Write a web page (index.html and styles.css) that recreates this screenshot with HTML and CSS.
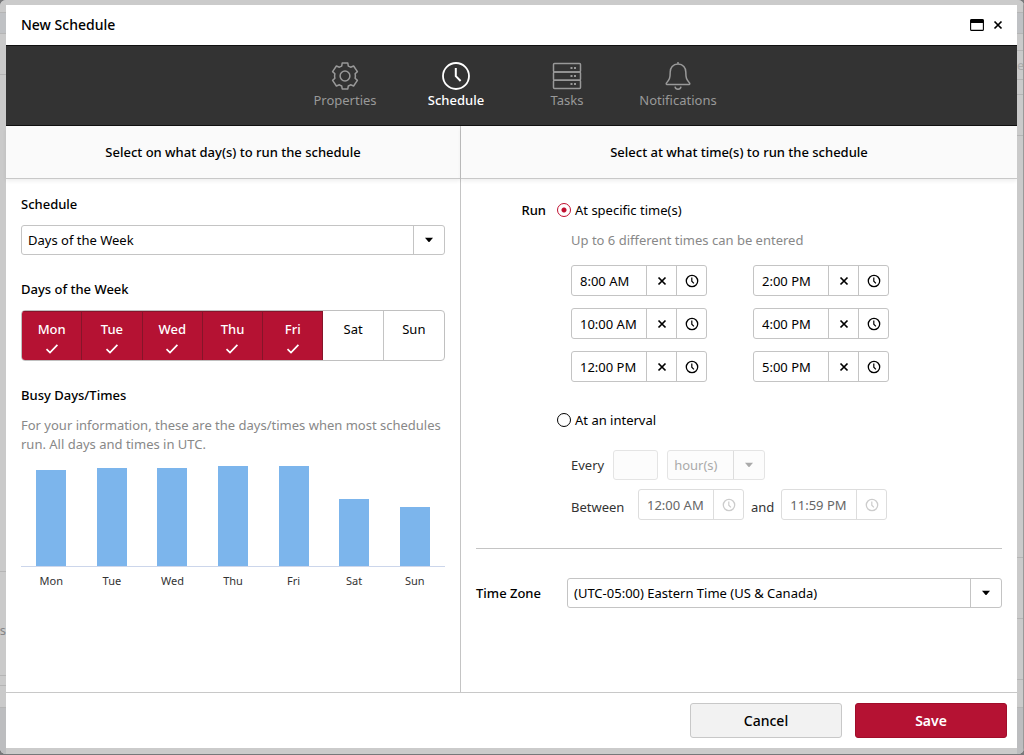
FILE: index.html
```html
<!DOCTYPE html>
<html lang="en">
<head>
<meta charset="utf-8">
<title>New Schedule</title>
<link rel="stylesheet" href="styles.css">
</head>
<body>
<svg class="defs" aria-hidden="true">
  <symbol id="i-clock" viewBox="0 0 14 14"><circle cx="7" cy="7" r="5.7" fill="none" stroke="currentColor" stroke-width="1.3"/><path d="M6.8 3.6V7.2L8.9 9.4" fill="none" stroke="currentColor" stroke-width="1.2"/></symbol>
  <symbol id="i-close" viewBox="0 0 10 10"><path d="M1.5 1.5L8.5 8.5M8.5 1.5L1.5 8.5" fill="none" stroke="currentColor" stroke-width="1.7"/></symbol>
  <symbol id="i-caret" viewBox="0 0 10 6"><path d="M1 .8H9L5.6 4.7Q5 5.3 4.4 4.7Z" fill="currentColor"/></symbol>
  <symbol id="i-check" viewBox="0 0 14 12"><path d="M1.5 6.2L5 9.6L12.4 1.8" fill="none" stroke="currentColor" stroke-width="1.7"/></symbol>
</svg>
<div class="page">
  <div class="edge edge-left" aria-hidden="true">
    <i class="h-13"></i><i class="h-21 tint"></i><i class="h-41"></i><i class="grow"></i><i class="h-104 word"><b>s</b></i><i class="h-10"></i><i class="h-22"></i><i class="h-46 base"></i>
  </div>
  <main class="dialog" role="dialog" aria-labelledby="title">
    <header class="titlebar">
      <h1 id="title">New Schedule</h1>
      <button class="tool" aria-label="Maximize"><svg width="14" height="12" viewBox="0 0 14 12"><rect x=".6" y=".6" width="12.8" height="10.8" rx="1" fill="none" stroke="#000" stroke-width="1.1"/><path d="M.5 .5H13.5V4H.5Z" fill="#000"/></svg></button>
      <button class="tool" aria-label="Close"><svg width="10" height="10"><use href="#i-close"/></svg></button>
    </header>
    <nav class="tabs">
      <button class="tab"><svg width="28" height="28" viewBox="0 0 28 28" fill="none" stroke="currentColor" stroke-width="1.5" stroke-linejoin="round"><path d="M11.200 1H16.800L17.300 4.100Q18.500 4.500 19.600 5.200L22.600 4L26.400 9.600L24.100 11.700Q24.400 12.800 24.400 14Q24.400 15.200 24.100 16.300L26.400 18.400L22.600 24L19.600 22.800Q18.500 23.500 17.300 23.900L16.800 27H11.200L10.700 23.900Q9.500 23.500 8.400 22.800L5.400 24L1.600 18.400L3.900 16.300Q3.600 15.200 3.600 14Q3.600 12.800 3.900 11.700L1.600 9.600L5.400 4L8.400 5.200Q9.500 4.500 10.700 4.100Z"/><circle cx="14" cy="14" r="4.900"/></svg><span>Properties</span></button>
      <button class="tab active" aria-current="page"><svg width="28" height="28" viewBox="0 0 28 28" fill="none" stroke="currentColor"><circle cx="14" cy="14" r="13" stroke-width="1.800"/><path d="M13.800 6V14.200L18.600 19" stroke-width="2"/></svg><span>Schedule</span></button>
      <button class="tab"><svg width="30" height="28" viewBox="0 0 30 28" fill="none" stroke="currentColor" stroke-width="1.500"><rect x="1.500" y="1.500" width="27" height="8.400" rx="1"/><rect x="1.500" y="9.900" width="27" height="8.300" rx="1"/><rect x="1.500" y="18.200" width="27" height="8.400" rx="1"/><path d="M18.500 6H20.500M22 6H24M18.500 14H20.500M22 14H24M18.500 22H20.500M22 22H24" stroke-width="2"/></svg><span>Tasks</span></button>
      <button class="tab"><svg width="28" height="28" viewBox="0 0 28 28" fill="none" stroke="currentColor" stroke-width="1.500" stroke-linejoin="round"><path d="M14 0V2M14 2C8.800 2 6.200 5.800 6.200 10C6.200 16.500 5.400 17.300 2.300 21.200Q2 22.200 3 22.400H25Q26 22.200 25.700 21.200C22.600 17.300 21.800 16.500 21.800 10C21.800 5.800 19.200 2 14 2Z"/><path d="M11 24.600Q11.500 27.200 14 27.200Q16.500 27.200 17 24.600"/></svg><span>Notifications</span></button>
    </nav>
    <div class="panels">
      <section class="panel days">
        <h2 class="panel-head">Select on what day(s) to run the schedule</h2>
        <form class="days-body">
          <label class="label" for="kind">Schedule</label>
          <div class="select"><select id="kind"><option>Days of the Week</option></select><span class="cell"><svg width="10" height="6"><use href="#i-caret"/></svg></span></div>
          <fieldset class="week">
            <legend class="label">Days of the Week</legend>
            <div class="toggles">
              <label class="toggle"><input type="checkbox" checked>Mon<svg width="14" height="12"><use href="#i-check"/></svg></label>
              <label class="toggle"><input type="checkbox" checked>Tue<svg width="14" height="12"><use href="#i-check"/></svg></label>
              <label class="toggle"><input type="checkbox" checked>Wed<svg width="14" height="12"><use href="#i-check"/></svg></label>
              <label class="toggle"><input type="checkbox" checked>Thu<svg width="14" height="12"><use href="#i-check"/></svg></label>
              <label class="toggle"><input type="checkbox" checked>Fri<svg width="14" height="12"><use href="#i-check"/></svg></label>
              <label class="toggle"><input type="checkbox">Sat<svg width="14" height="12"><use href="#i-check"/></svg></label>
              <label class="toggle"><input type="checkbox">Sun<svg width="14" height="12"><use href="#i-check"/></svg></label>
            </div>
          </fieldset>
          <h3 class="label">Busy Days/Times</h3>
          <p class="note">For your information, these are the days/times when most schedules run. All days and times in UTC.</p>
          <div class="chart">
            <div class="plot">
              <i style="height:96%"></i><i style="height:98%"></i><i style="height:98%"></i><i style="height:100%"></i><i style="height:100%"></i><i style="height:67%"></i><i style="height:59%"></i>
            </div>
            <div class="axis"><span>Mon</span><span>Tue</span><span>Wed</span><span>Thu</span><span>Fri</span><span>Sat</span><span>Sun</span></div>
          </div>
        </form>
      </section>
      <section class="panel times">
        <h2 class="panel-head">Select at what time(s) to run the schedule</h2>
        <form class="times-body">
          <div class="run">
            <span class="label run-label">Run</span>
            <div class="options">
              <label class="radio"><input type="radio" name="run" checked>At specific time(s)</label>
              <p class="hint">Up to 6 different times can be entered</p>
              <div class="slots">
                <div class="time"><input aria-label="Time 1" value="8:00 AM"><button type="button" class="cell" aria-label="Clear"><svg width="10" height="10"><use href="#i-close"/></svg></button><button type="button" class="cell" aria-label="Pick time"><svg width="14" height="14"><use href="#i-clock"/></svg></button></div>
                <div class="time"><input aria-label="Time 4" value="2:00 PM"><button type="button" class="cell" aria-label="Clear"><svg width="10" height="10"><use href="#i-close"/></svg></button><button type="button" class="cell" aria-label="Pick time"><svg width="14" height="14"><use href="#i-clock"/></svg></button></div>
                <div class="time"><input aria-label="Time 2" value="10:00 AM"><button type="button" class="cell" aria-label="Clear"><svg width="10" height="10"><use href="#i-close"/></svg></button><button type="button" class="cell" aria-label="Pick time"><svg width="14" height="14"><use href="#i-clock"/></svg></button></div>
                <div class="time"><input aria-label="Time 5" value="4:00 PM"><button type="button" class="cell" aria-label="Clear"><svg width="10" height="10"><use href="#i-close"/></svg></button><button type="button" class="cell" aria-label="Pick time"><svg width="14" height="14"><use href="#i-clock"/></svg></button></div>
                <div class="time"><input aria-label="Time 3" value="12:00 PM"><button type="button" class="cell" aria-label="Clear"><svg width="10" height="10"><use href="#i-close"/></svg></button><button type="button" class="cell" aria-label="Pick time"><svg width="14" height="14"><use href="#i-clock"/></svg></button></div>
                <div class="time"><input aria-label="Time 6" value="5:00 PM"><button type="button" class="cell" aria-label="Clear"><svg width="10" height="10"><use href="#i-close"/></svg></button><button type="button" class="cell" aria-label="Pick time"><svg width="14" height="14"><use href="#i-clock"/></svg></button></div>
              </div>
              <label class="radio second"><input type="radio" name="run">At an interval</label>
              <div class="line every">
                <label for="every">Every</label>
                <input id="every" class="count" disabled>
                <div class="select off unit"><select aria-label="Unit" disabled><option>hour(s)</option></select><span class="cell"><svg width="10" height="6"><use href="#i-caret"/></svg></span></div>
              </div>
              <div class="line between">
                <label class="from-label" for="from">Between</label>
                <div class="time short off"><input id="from" value="12:00 AM" disabled><button type="button" class="cell" aria-label="Pick time" disabled><svg width="14" height="14"><use href="#i-clock"/></svg></button></div>
                <label class="and" for="to">and</label>
                <div class="time short off"><input id="to" value="11:59 PM" disabled><button type="button" class="cell" aria-label="Pick time" disabled><svg width="14" height="14"><use href="#i-clock"/></svg></button></div>
              </div>
            </div>
          </div>
          <div class="zone">
            <label class="label" for="zone">Time Zone</label>
            <div class="select"><select id="zone"><option>(UTC-05:00) Eastern Time (US &amp; Canada)</option></select><span class="cell"><svg width="10" height="6"><use href="#i-caret"/></svg></span></div>
          </div>
        </form>
      </section>
    </div>
    <footer class="actions">
      <button class="btn">Cancel</button>
      <button class="btn primary">Save</button>
    </footer>
  </main>
  <div class="edge edge-right" aria-hidden="true">
    <i class="h-13"></i><i class="h-21 tint"></i><i class="h-17"></i><i class="h-29 word"><b>ec</b></i><i class="h-15"></i><i class="h-41"></i><i class="grow"></i><i class="h-61"></i><i class="h-61"></i><i class="h-28"></i><i class="h-46 base"></i>
  </div>
</div>
</body>
</html>
```

FILE: styles.css
```css
* { box-sizing: border-box; }
body, h1, h2, h3, p, fieldset, legend { margin: 0; padding: 0; border: 0; }
body {
  background: #77787a;
  color: #000;
  font: 13px/20px "Noto Sans", "Open Sans", sans-serif;
}
button, input, select { margin: 0; font: inherit; color: inherit; }
button { padding: 0; border: 0; background: none; cursor: pointer; }
svg { display: block; flex: none; }
.defs { position: absolute; width: 0; height: 0; }

.page {
  display: grid;
  grid-template-columns: 6px minmax(0, 1fr) 7px;
  min-height: calc(100vh - 1px);
  border-radius: 6px;
  overflow: hidden;
  background: #cbcbcb;
}

/* strips of the dimmed page behind the dialog */
.edge { display: flex; flex-direction: column; overflow: hidden; background: #cacaca; color: #858585; }
.edge-right { border-right: 1px solid #999; color: #aaa; }
.edge i { border-bottom: 1px solid #b5b5b5; font-style: normal; overflow: hidden; }
.edge b { display: block; font-weight: 400; }
.edge .tint { background: #bfc1c4; }
.edge .base { background: #bcbdbf; border: 0; }
.edge .word { display: flex; align-items: center; }
.edge-left .word { justify-content: flex-end; padding-top: 12px; }
.h-10 { height: 10px; }
.h-13 { height: 13px; }
.h-15 { height: 15px; }
.h-17 { height: 17px; }
.h-21 { height: 21px; }
.h-22 { height: 22px; }
.h-28 { height: 28px; }
.h-29 { height: 29px; }
.h-41 { height: 41px; }
.h-46 { height: 46px; }
.h-61 { height: 61px; }
.h-104 { height: 104px; }
.grow { flex: 1; }

.dialog {
  display: flex;
  flex-direction: column;
  margin: 5px 0 6px;
  background: #fff;
}
.titlebar { display: flex; align-items: center; gap: 9px; height: 40px; padding: 0 14px 0 15px; }
.titlebar h1 { flex: 1; font-size: 14px; font-weight: 500; }

.tabs {
  display: flex;
  justify-content: center;
  padding: 16px 0 15px;
  border: solid #111;
  border-width: 1px 0;
  background: #333;
}
.tab { display: flex; flex-direction: column; align-items: center; width: 111px; color: #999; line-height: 20px; }
.tab.active { color: #fff; font-weight: 500; }

.panels { display: grid; grid-template-columns: 455px minmax(0, 1fr); flex: 1; }
.days { border-right: 1px solid #c4c4c4; }
.panel-head {
  padding: 16px 0;
  border-bottom: 1px solid #c8c8c8;
  background: #fafafa;
  box-shadow: 0 2px 4px rgba(0, 0, 0, .07);
  font-size: 13px;
  font-weight: 500;
  text-align: center;
}
.label { font-size: 13px; font-weight: 500; }
.days-body { display: flex; flex-direction: column; padding: 15px; }

.select { display: grid; grid-template-columns: 1fr 31px; height: 30px; border: 1px solid #c4c4c4; border-radius: 3px; background: #fff; }
.select select {
  grid-area: 1 / 1 / 2 / 3;
  width: 100%;
  padding: 0 31px 0 6px;
  border: 0;
  appearance: none;
  background: none;
  opacity: 1;
}
.select .cell { grid-area: 1 / 2; pointer-events: none; }
.cell { display: flex; align-items: center; justify-content: center; border-left: 1px solid #c4c4c4; }

.days-body .select { margin: 11px 0 24px; }
.toggles {
  display: grid;
  grid-template-columns: repeat(7, 1fr);
  height: 51px;
  margin: 11px 0 24px;
  border: 1px solid #c0c0c0;
  border-radius: 4px;
  overflow: hidden;
}
.toggle { display: flex; flex-direction: column; align-items: center; padding-top: 8px; gap: 4px; border-right: 1px solid #c4c4c4; }
.toggle:last-child { border-right: 0; }
.toggle svg { color: transparent; }
.toggle input { position: absolute; opacity: 0; }
.toggle:has(:checked) { border-color: #86152a; background: #b51233; box-shadow: inset 0 1px #86152a; color: #fff; font-weight: 500; }
.toggle:has(:checked) svg { color: #fff; }

.note { margin-top: 11px; color: #888; line-height: 19px; }
.chart { margin-top: 12px; }
.plot { display: grid; grid-template-columns: repeat(7, 1fr); align-items: end; justify-items: center; height: 101px; border-bottom: 1px solid #ccd6eb; }
.plot i { width: 30px; background: #7cb5ec; }
.axis { display: grid; grid-template-columns: repeat(7, 1fr); padding-top: 4px; color: #333; font-size: 11px; text-align: center; }

.times-body { padding: 21px 15px; }
.run { display: flex; gap: 11px; padding-bottom: 28px; border-bottom: 1px solid #c4c4c4; }
.run-label { width: 70px; text-align: right; }
.radio { display: flex; align-items: center; gap: 4px; }
.radio input { width: 14px; height: 14px; border: 1px solid #000; border-radius: 50%; appearance: none; background: #fff; }
.radio input:checked { border-color: #c00f2f; background: radial-gradient(circle, #c00f2f 2px, #fff 3px); }
.hint { margin: 10px 0 15px 14px; color: #888; }
.slots { display: grid; grid-template-columns: 136px 136px; gap: 12px 46px; margin-left: 14px; }
.time { display: grid; grid-template-columns: 1fr 30px 30px; height: 31px; border: 1px solid #c4c4c4; border-radius: 3px; background: #fff; }
.time input { min-width: 0; padding: 0 8px; border: 0; background: none; }
.short { grid-template-columns: 1fr 30px; width: 106px; }
.off { border-color: #ddd; color: #666; }
.off .cell { border-color: #ddd; color: #ccc; }
.second { margin-top: 28px; }
.line { display: flex; align-items: center; margin-left: 14px; color: #333; }
.every { gap: 9px; margin-top: 20px; }
.count { width: 45px; height: 30px; border: 1px solid #e4e4e4; border-radius: 3px; background: #fcfcfc; }
.unit { width: 98px; border-color: #e4e4e4; background: #fcfcfc; color: #aaa; }
.unit .cell { color: #aaa; }
.between { gap: 7px; margin-top: 9px; }
.from-label { width: 60px; }

.between label { padding-top: 4px; }
.zone { display: flex; align-items: center; margin-top: 29px; }
.zone .label { width: 91px; }
.zone .select { flex: 1; }

.actions { display: flex; justify-content: flex-end; gap: 13px; padding: 10px; border-top: 1px solid #c8c8c8; }
.btn { width: 152px; height: 35px; border: 1px solid #c8c8c8; border-radius: 3px; background: #f2f2f2; font-size: 14px; font-weight: 500; }
.primary { border-color: #a00d2a; background: #b51233; color: #fff; font-weight: 600; }
```
